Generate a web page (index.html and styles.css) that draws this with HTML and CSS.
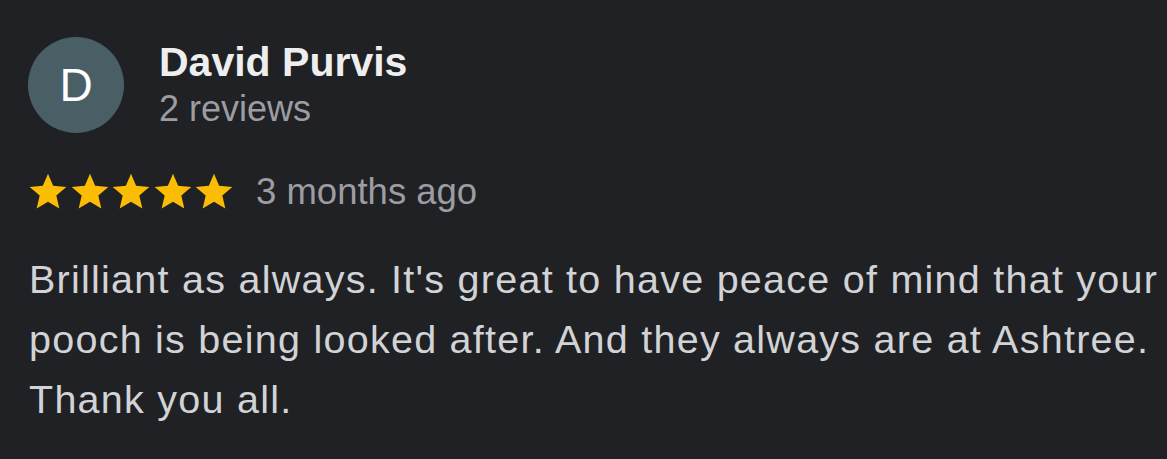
FILE: index.html
```html
<!DOCTYPE html>
<html>
<head>
<meta charset="utf-8">
<link rel="stylesheet" href="styles.css">
</head>
<body>
<div class="review">
  <div class="author">
    <div class="avatar">D</div>
    <div class="who">
      <div class="name">David Purvis</div>
      <div class="count">2 reviews</div>
    </div>
  </div>
  <div class="meta">
    <div class="stars">
      <svg viewBox="0 0 24 24" class="star"><path d="M12 17.27L18.18 21l-1.64-7.03L22 9.24l-7.19-.61L12 2 9.19 8.63 2 9.24l5.46 4.73L5.82 21z"/></svg>
      <svg viewBox="0 0 24 24" class="star"><path d="M12 17.27L18.18 21l-1.64-7.03L22 9.24l-7.19-.61L12 2 9.19 8.63 2 9.24l5.46 4.73L5.82 21z"/></svg>
      <svg viewBox="0 0 24 24" class="star"><path d="M12 17.27L18.18 21l-1.64-7.03L22 9.24l-7.19-.61L12 2 9.19 8.63 2 9.24l5.46 4.73L5.82 21z"/></svg>
      <svg viewBox="0 0 24 24" class="star"><path d="M12 17.27L18.18 21l-1.64-7.03L22 9.24l-7.19-.61L12 2 9.19 8.63 2 9.24l5.46 4.73L5.82 21z"/></svg>
      <svg viewBox="0 0 24 24" class="star"><path d="M12 17.27L18.18 21l-1.64-7.03L22 9.24l-7.19-.61L12 2 9.19 8.63 2 9.24l5.46 4.73L5.82 21z"/></svg>
    </div>
    <span class="when">3 months ago</span>
  </div>
  <p class="text">Brilliant as always. It's great to have peace of mind that your pooch is being looked after. And they always are at Ashtree. Thank you all.</p>
</div>
</body>
</html>
```

FILE: styles.css
```css
html, body {
  margin: 0;
  padding: 0;
  background: #202124;
  width: 1167px;
  height: 459px;
  overflow: hidden;
}
body {
  font-family: "Liberation Sans", Arial, sans-serif;
}
.review {
  padding: 37px 0 0 28px;
}
.author {
  display: flex;
  align-items: flex-start;
  gap: 35px;
}
.avatar {
  width: 96px;
  height: 96px;
  border-radius: 50%;
  background: #4a5e66;
  color: #ffffff;
  font-size: 46px;
  line-height: 1;
  display: flex;
  align-items: center;
  justify-content: center;
  flex: none;
}
.name {
  color: #eeeeef;
  font-weight: bold;
  font-size: 41px;
  line-height: 50px;
}
.count {
  color: #9b9da2;
  font-size: 36px;
  line-height: 44px;
}
.meta {
  display: flex;
  align-items: center;
  margin-top: 37px;
  height: 44px;
}
.stars {
  display: flex;
  margin-left: -2px;
  margin-right: 20px;
}
.star {
  width: 44px;
  height: 44px;
  fill: #fbbc04;
  margin-right: -2.5px;
}
.star:last-child {
  margin-right: 0;
}
.when {
  color: #9b9da2;
  font-size: 36.5px;
  line-height: 44px;
}
.text {
  margin: 35px 0 0 1px;
  color: #d2d3d6;
  font-size: 39.5px;
  letter-spacing: 1.25px;
  line-height: 60px;
  width: 1137px;
}
```
